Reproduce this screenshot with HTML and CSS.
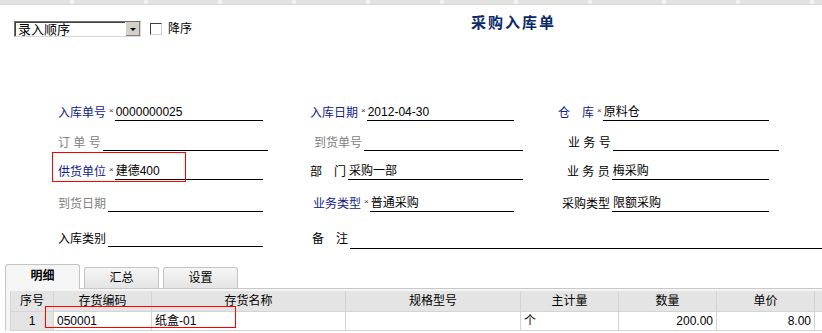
FILE: index.html
```html
<!DOCTYPE html>
<html lang="zh">
<head>
    <meta charset="UTF-8">
    <title>采购入库单</title>
    <link rel="stylesheet" href="styles.css">
</head>
<body>
    <div class="strip"></div>

    <div class="toolbar">
        <div class="select">
            <span class="select-text">录入顺序</span>
            <span class="select-btn"><span class="arrow"></span></span>
        </div>
        <label class="check"><span class="box"></span>降序</label>
        <h1 class="title">采购入库单</h1>
    </div>

    <div class="form">
        <div class="row r1">
            <div class="field col1"><span class="lbl blue">入库单号</span><span class="req">×</span><span class="val">0000000025</span></div>
            <div class="field col2"><span class="lbl blue">入库日期</span><span class="req">×</span><span class="val">2012-04-30</span></div>
            <div class="field col3"><span class="lbl blue">仓　库</span><span class="req">×</span><span class="val">原料仓</span></div>
        </div>
        <div class="row r2">
            <div class="field col1 wide"><span class="lbl gray">订 单 号</span><span class="val"></span></div>
            <div class="field col2 wide"><span class="lbl gray in4">到货单号</span><span class="val"></span></div>
            <div class="field col3 wide"><span class="lbl in10">业 务 号</span><span class="val"></span></div>
        </div>
        <div class="row r3">
            <div class="field col1"><span class="lbl blue">供货单位</span><span class="req">×</span><span class="val">建德400</span></div>
            <div class="field col2 wide"><span class="lbl">部　门</span><span class="val">采购一部</span></div>
            <div class="field col3"><span class="lbl in9">业 务 员</span><span class="val">梅采购</span></div>
        </div>
        <div class="row r4">
            <div class="field col1"><span class="lbl gray">到货日期</span><span class="val"></span></div>
            <div class="field col2"><span class="lbl blue in3">业务类型</span><span class="req">×</span><span class="val">普通采购</span></div>
            <div class="field col3 short"><span class="lbl in4">采购类型</span><span class="val">限额采购</span></div>
        </div>
        <div class="row r5">
            <div class="field col1"><span class="lbl">入库类别</span><span class="val"></span></div>
            <div class="field rest"><span class="lbl in2">备　注</span><span class="val"></span></div>
        </div>
    </div>

    <div class="tabs">
        <div class="tab active">明细</div>
        <div class="tab">汇总</div>
        <div class="tab">设置</div>
    </div>

    <div class="panel">
        <table class="grid">
            <colgroup>
                <col class="w43"><col class="w98"><col class="w194"><col class="w175">
                <col class="w98"><col class="w98"><col class="w98"><col class="w40">
            </colgroup>
            <thead>
                <tr>
                    <th>序号</th><th>存货编码</th><th>存货名称</th><th>规格型号</th>
                    <th>主计量</th><th>数量</th><th>单价</th><th></th>
                </tr>
            </thead>
            <tbody>
                <tr>
                    <td class="num">1</td><td>050001</td><td>纸盒-01</td><td></td>
                    <td>个</td><td class="right">200.00</td><td class="right">8.00</td><td></td>
                </tr>
            </tbody>
        </table>
    </div>

    <!-- marques rouges -->
    <div class="mark mark-supplier"></div>
    <div class="mark mark-item"></div>
</body>
</html>
```

FILE: styles.css
```css
/* Page */
body {
    margin: 0;
    width: 822px;
    height: 333px;
    overflow: hidden;
    position: relative;
    background: #fff;
    color: #000;
    font-family: 'Liberation Sans', 'Noto Sans CJK SC', sans-serif;
    font-size: 12px;
}

.strip {
    height: 4px;
    background: repeating-linear-gradient(90deg, #e2e2e2 0, #e2e2e2 70px, #f2f2f2 70px, #f2f2f2 74px);
    border-bottom: 1px solid #d8d8d8;
}

/* Barre du haut */
.toolbar {
    display: flex;
    align-items: flex-start;
    height: 40px;
}

.select {
    display: flex;
    margin: 16px 0 0 14px;
    width: 125px;
    height: 14px;
    border: 1px solid #707070;
    border-right-color: #d8d8d8;
    border-bottom-color: #d8d8d8;
    box-shadow: inset 1px 1px 0 #404040;
}

.select-text {
    flex: 1;
    padding-left: 3px;
    line-height: 15px;
    font-size: 13px;
}

.select-btn {
    width: 14px;
    height: 14px;
    background: #d4d0c8;
    border-left: 1px solid #fff;
    box-shadow: inset -1px -1px 0 #808080;
    display: flex;
    align-items: center;
    justify-content: center;
}

    .select-btn .arrow {
        width: 0;
        height: 0;
        border-left: 3px solid transparent;
        border-right: 3px solid transparent;
        border-top: 3px solid #000;
    }

.check {
    display: flex;
    align-items: center;
    margin: 17px 0 0 9px;
    line-height: 14px;
}

    .check .box {
        width: 10px;
        height: 10px;
        border: 1px solid #404040;
        border-right-color: #d0d0d0;
        border-bottom-color: #d0d0d0;
        margin-right: 6px;
    }

.title {
    margin: 8px 0 0 279px;
    font-size: 15px;
    font-weight: bold;
    letter-spacing: 2px;
    color: #0c2a6a;
    line-height: 20px;
}

/* Formulaire */
.form {
    padding-top: 46px;
}

.row {
    display: flex;
    align-items: flex-end;
    padding-left: 58px;
}

.r1 { height: 30px; }
.r2 { height: 30px; }
.r3 { height: 29px; }
.r4 { height: 32px; }
.r5 { height: 35px; }

.field {
    display: flex;
    align-items: flex-end;
}

.col1 { width: 205px; margin-right: 47px; }
.col2 { width: 204px; margin-right: 44px; }
.col3 { width: 211px; }
.col1.wide { width: 210px; margin-right: 42px; }
.col2.wide { width: 213px; margin-right: 35px; }
.col3.wide { width: 221px; }
.col3.short { width: 211px; }
.rest { flex: 1; }

.lbl {
    line-height: 16px;
    white-space: pre;
    padding-right: 2px;
}

.blue { color: #10208a; }
.gray { color: #808080; }
.in2 { padding-left: 2px; }
.in3 { padding-left: 3px; }
.in4 { padding-left: 4px; }
.in9 { padding-left: 9px; }
.in10 { padding-left: 10px; }

.req {
    font-size: 8px;
    color: #333;
    line-height: 16px;
    padding: 0 1px;
    align-self: center;
    margin-top: -4px;
}

.val {
    flex: 1;
    height: 16px;
    line-height: 16px;
    border-bottom: 1px solid #000;
    padding-left: 1px;
    white-space: nowrap;
}

.r5 .rest .val {
    margin-bottom: -2px;
}

/* Onglets */
.tabs {
    display: flex;
    align-items: flex-end;
    margin-top: 16px;
    padding-left: 5px;
    height: 25px;
}

.tab {
    width: 73px;
    height: 20px;
    line-height: 21px;
    text-align: center;
    margin-right: 4px;
    border: 1px solid #c4c4c4;
    border-bottom: none;
    border-radius: 3px 3px 0 0;
    background: linear-gradient(#f6f6f6, #e4e4e4);
}

    .tab.active {
        height: 24px;
        line-height: 22px;
        font-weight: bold;
        background: #f5f5f5;
        position: relative;
        z-index: 1;
        margin-bottom: -1px;
    }

.panel {
    margin-left: 5px;
    border-top: 1px solid #c8c8c8;
    border-left: 1px solid #c8c8c8;
    background: #f5f5f5;
    padding: 2px 0 0 4px;
}

/* Tableau */
.grid {
    border-collapse: collapse;
    table-layout: fixed;
    width: 844px;
    background: #fff;
}

.w43 { width: 43px; }
.w98 { width: 98px; }
.w194 { width: 194px; }
.w175 { width: 175px; }
.w40 { width: 40px; }

    .grid th {
        height: 20px;
        font-weight: normal;
        background: #e4e4e4;
        border: 1px solid #d4d4d4;
        border-top: none;
        padding: 0;
        line-height: 20px;
    }

    .grid td {
        height: 18px;
        border: 1px solid #d4d4d4;
        border-top: none;
        padding: 0 3px;
        line-height: 18px;
        white-space: nowrap;
    }

        .grid td.num {
            text-align: center;
            background: #e4e4e4;
        }

        .grid td.right {
            text-align: right;
        }

/* Marques rouges par-dessus */
.mark {
    position: absolute;
    border: 1px solid #ff0000;
}

.mark-supplier {
    left: 52px;
    top: 152px;
    width: 132px;
    height: 28px;
}

.mark-item {
    left: 45px;
    top: 306px;
    width: 189px;
    height: 20px;
}
```
